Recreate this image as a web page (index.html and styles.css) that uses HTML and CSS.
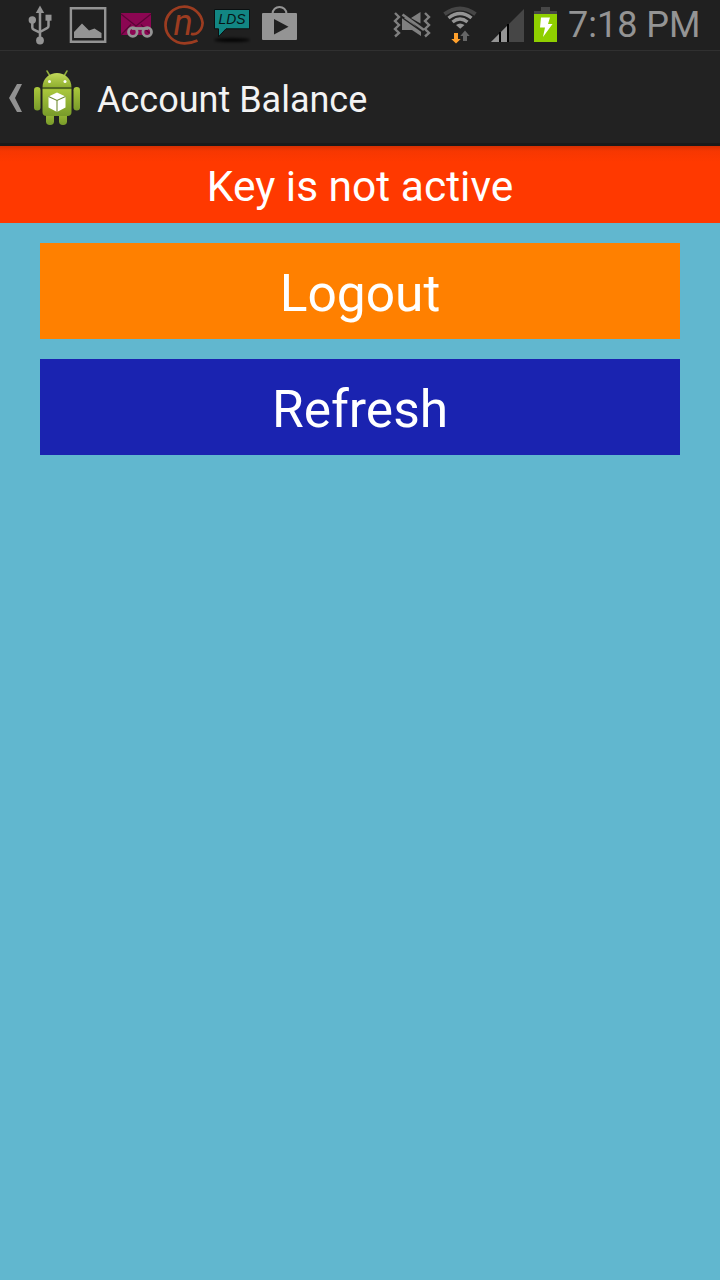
FILE: index.html
```html
<!DOCTYPE html>
<html lang="en">
<head>
<meta charset="utf-8">
<title>Account Balance</title>
<link rel="stylesheet" href="styles.css">
</head>
<body>
<div class="status">
  <div class="notifications">
    <svg width="26" height="50" viewBox="27 0 26 50">
      <g fill="#949494"><path d="M40 5.500l4.200 7.500h-8.400z"/><circle cx="32.300" cy="20" r="3.700"/><path d="M45.500 14.700h6v6h-6z"/><circle cx="40" cy="40.500" r="3.900"/></g>
      <path d="M40 11v29M32.300 20v7.500q0 1.500 1.500 2.200l6.200 3M48.500 19v7q0 1.500-1.500 2.200L40 32" fill="none" stroke="#949494" stroke-width="2.500"/>
    </svg>
    <svg width="38" height="50" viewBox="69 0 38 50">
      <path d="M70.900 8.200h34.300v33.600H70.900z" fill="none" stroke="#949494" stroke-width="2.400"/>
      <path d="M74 38v-6l8-8.500 7 7 5.500-2 7 4.500v5z" fill="#949494"/>
    </svg>
    <svg width="34" height="50" viewBox="120 0 34 50">
      <path d="M121 13h30v22h-30z" fill="#8b0652"/>
      <path d="M121 35l10-10.500M151 35l-10-10.500M121 14l15 12 15-12" fill="none" stroke="#590535" stroke-width="1.200"/>
      <g fill="none" stroke="#949494" stroke-width="2.800"><circle cx="132.800" cy="32" r="4.300"/><circle cx="147.200" cy="32" r="4.300"/><path d="M132 28.500h16"/></g>
    </svg>
    <svg width="42" height="50" viewBox="163 0 42 50">
      <path d="M197.500 40.500Q191 43.500 184 43.300A18.600 18.300 0 1 1 202.600 23Q202.300 29 198 32.500Q195 35 191 33.700" fill="none" stroke="#9c3c20" stroke-width="2.700"/>
      <text class="logo-n" x="173.500" y="34.500">n</text>
    </svg>
    <svg width="38" height="50" viewBox="213 0 38 50">
      <defs><filter id="soft" x="-20%" y="-100%" width="140%" height="300%"><feGaussianBlur stdDeviation="1.500"/></filter></defs>
      <ellipse cx="232" cy="40" rx="18" ry="1.800" fill="#000" filter="url(#soft)"/>
      <path d="M214.500 9.500h35v19.300h-23.500l-7.500 8v-8h-4z" fill="#128683" stroke="#0b1011"/>
      <text class="logo-lds" x="218.500" y="24" textLength="27" lengthAdjust="spacingAndGlyphs">LDS</text>
    </svg>
    <svg width="37" height="50" viewBox="261 0 37 50">
      <path d="M272.500 14c0-9.500 14-9.500 14 0" fill="none" stroke="#949494" stroke-width="2"/>
      <path d="M263 13h33q1 0 1 1v25q0 1-1 1h-33q-1 0-1-1V14q0-1 1-1z" fill="#949494"/>
      <path d="M274 19l14.500 7.700-14.500 7.700z" fill="#202020"/>
    </svg>
  </div>
  <div class="system">
    <svg width="40" height="50" viewBox="393 0 40 50">
      <path d="M402 18h5l14 13.500V36l-9-6h-10zM411 18l9.500-6v11.500z" fill="#7f7f7f"/>
      <path d="M402 17.500l22 15.500" stroke="#202020" stroke-width="1.500"/><path d="M402.500 14.500l21.500 15.500" stroke="#7f7f7f" stroke-width="2.700"/>
      <path d="M395 13l4 4-4 4 4 4-4 4 4 4-4 3.500M425 13l4 4-4 4 4 4-4 4 4 4-4 3.500" fill="none" stroke="#7f7f7f" stroke-width="2.400"/>
    </svg>
    <svg width="34" height="50" viewBox="443 0 34 50">
      <g fill="none" stroke="#949494"><path d="M444.500 14.200q15.500-11.500 31 0" stroke="#464646" stroke-width="4"/><path d="M448.500 18q11.500-9 23 0M452.500 22q7.500-6 15 0" stroke-width="3.400"/></g>
      <path d="M456 25q4-3 8.500 0l-4.300 3.700z" fill="#949494"/>
      <path d="M454 33h4v6h2.700l-4.700 4.500-4.700-4.500h2.700z" fill="#ffa02c"/>
      <path d="M463 41h4v-5h2.700l-4.700-5.500-4.700 5.500h2.700z" fill="#666"/>
    </svg>
    <svg width="34" height="50" viewBox="490 0 34 50">
      <path d="M491 42l33-33v33z" fill="#464646"/>
      <path d="M491 42l16-16v16z" fill="#949494"/>
      <path d="M500 32v10M508 24v18" stroke="#000" stroke-width="2"/>
    </svg>
    <svg width="25" height="50" viewBox="533 0 25 50">
      <path d="M541 7h9v4h7v4h-23v-4h7z" fill="#464646"/><path d="M534 14h23v28h-23z" fill="#8fcf00"/>
      <path d="M541 17.500h9l-2 6.500h4.500l-9.500 13 2-9.500h-5z" fill="#fff"/>
    </svg>
    <span class="clock">7:18 PM</span>
  </div>
</div>
<div class="action-bar">
  <svg class="up" width="26" height="94" viewBox="7 51 26 94"><path d="M17 84h5l-7 14 7 14h-5l-8-14z" fill="#919191"/></svg>
  <svg class="robot" width="50" height="94" viewBox="32 51 50 94">
    <defs>
      <linearGradient id="g" x2="0" y2="1"><stop offset="0" stop-color="#abc83c"/><stop offset="1" stop-color="#789b2a"/></linearGradient>
      <linearGradient id="h" x2="0" y2="1"><stop offset="0" stop-color="#c2d95a"/><stop offset="1" stop-color="#8eae2e"/></linearGradient>
    </defs>
    <path d="M47 71l3 5M67 71l-3 5" stroke="#90ad3b" stroke-width="1.500" stroke-linecap="round"/>
    <g fill="url(#g)"><rect x="34" y="87" width="6.500" height="23.500" rx="3.200"/><rect x="73.500" y="87" width="6.500" height="23.500" rx="3.200"/><rect x="46" y="108" width="8" height="17" rx="3.800"/><rect x="59" y="108" width="8" height="17" rx="3.800"/><path d="M42.500 89h29v23q0 4-4 4h-21q-4 0-4-4z"/></g>
    <path d="M42.500 87.500c0-19.500 29-19.500 29 0z" fill="url(#h)"/>
    <path d="M42.500 88.500h29" stroke="#536d1e" stroke-width="1.200"/>
    <circle cx="49.500" cy="81.500" r="1.500" fill="#fff"/><circle cx="65" cy="81.500" r="1.500" fill="#fff"/>
    <path d="M57 92.500l8.500 4v11l-8.500 4.500-8.500-4.500v-11z" fill="#fff"/>
    <path d="M48.500 96.500l8.500 4 8.500-4M57 100.500V112" fill="none" stroke="#708b32" stroke-width="1.100"/>
  </svg>
  <h1 class="title">Account Balance</h1>
</div>
<div class="message">Key is not active</div>
<div class="actions">
  <button class="btn logout">Logout</button>
  <button class="btn refresh">Refresh</button>
</div>
</body>
</html>
```
FILE: styles.css
```css
body {
  margin: 0;
  min-height: 1280px;
  background: #61b7cf;
  font-family: Roboto, sans-serif;
}

svg {
  display: block;
  flex: none;
}

.status {
  box-sizing: border-box;
  height: 51px;
  padding: 0 22px 0 27px;
  display: flex;
  justify-content: space-between;
  background: #202020;
  border-bottom: 1px solid #303030;
}

.notifications {
  display: flex;
}

.notifications svg:nth-child(2) { margin-left: 16px; }
.notifications svg:nth-child(3) { margin-left: 13px; }
.notifications svg:nth-child(4) { margin-left: 9px; }
.notifications svg:nth-child(5) { margin-left: 8px; }
.notifications svg:nth-child(6) { margin-left: 10px; }

.logo-n {
  font: italic 36px Roboto, sans-serif;
  fill: #9c3c20;
}

.logo-lds {
  font: italic 14px "Liberation Sans", sans-serif;
  fill: #061516;
}

.system {
  width: 305px;
  display: flex;
}

.system svg:nth-child(2) { margin-left: 10px; }
.system svg:nth-child(3) { margin-left: 13px; }
.system svg:nth-child(4) { margin-left: 9px; }

.clock {
  margin-left: 10px;
  font-size: 36px;
  line-height: 50px;
  color: #949494;
  white-space: nowrap;
}

.action-bar {
  box-sizing: border-box;
  height: 95px;
  padding-left: 7px;
  display: flex;
  background: #222;
  border-bottom: 3px solid #1a1a1a;
}

.robot {
  margin-left: -1px;
}

.title {
  margin: 0 0 0 15px;
  font-size: 36px;
  font-weight: 400;
  line-height: 99px;
  color: #f3f3f3;
}

.message {
  box-sizing: border-box;
  height: 77px;
  padding-top: 5px;
  background: linear-gradient(#d53003, #f63701 5px, #ff3900 16px);
  color: #fff;
  font-size: 42.5px;
  line-height: 72px;
  text-align: center;
}

.actions {
  padding: 20px 40px;
  display: grid;
  gap: 20px;
}

.btn {
  height: 96px;
  padding: 5px 0 0;
  border: 0;
  color: #fff;
  font: 51.5px/91px Roboto, sans-serif;
}

.logout { background: #ff8000; }
.refresh { background: #1a23b0; }
```
